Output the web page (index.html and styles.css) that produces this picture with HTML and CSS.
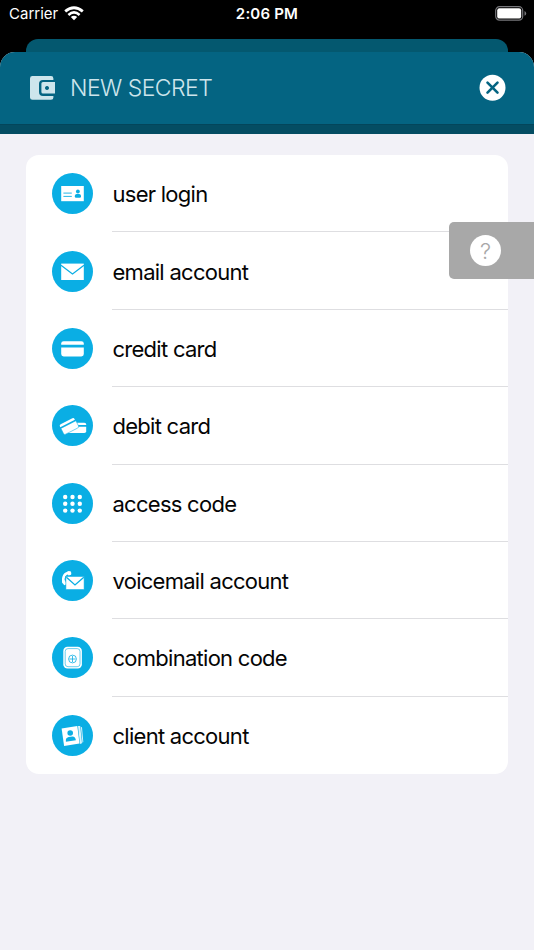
FILE: index.html
```html
<!DOCTYPE html>
<html lang="en">
<head>
  <meta charset="UTF-8">
  <meta name="viewport" content="width=device-width, initial-scale=1.0">
  <title>New Secret</title>
  <link rel="stylesheet" href="styles.css">
</head>
<body>
  <div class="status-bar">
    <div class="carrier">
      <span>Carrier</span>
      <svg class="wifi" viewBox="0 0 20 15" width="20" height="15">
        <path d="M1.2 5.4 Q10 -2 18.8 5.4" fill="none" stroke="#fff" stroke-width="2.8"/>
        <path d="M4.4 8.9 Q10 4 15.6 8.9" fill="none" stroke="#fff" stroke-width="2.6"/>
        <path d="M6.8 11.1 Q10 8.5 13.2 11.1 L10 14.2Z" fill="#fff"/>
      </svg>
    </div>
    <div class="time">2:06 PM</div>
    <svg class="battery" viewBox="0 0 32 15" width="32" height="15">
      <rect x=".7" y=".7" width="27" height="13.4" rx="3.8" fill="none" stroke="#77777b" stroke-width="1.2"/>
      <rect x="2.2" y="2.2" width="24" height="10.4" rx="2.2" fill="#fff"/>
      <path d="M29.5 5 Q31.2 5.8 31.2 7.4 T29.5 9.8Z" fill="#77777b"/>
    </svg>
  </div>
  <div class="back-sheet"></div>

  <div class="sheet">
    <header class="header">
      <svg class="wallet" viewBox="0 0 26 24" width="26" height="24">
        <path d="M2.5 0 H21 Q23.4 0 23.4 2.4 V4 H13 Q9 4 9 8 V16 Q9 20 13 20 H23.4 V21.4 Q23.4 23.8 21 23.8 H2.5 Q0 23.8 0 21.4 V2.4 Q0 0 2.5 0Z" fill="#cde5ec"/>
        <path fill-rule="evenodd" d="M13 6 H25 V17.6 H13 Q11.4 17.6 11.4 16 V7.6 Q11.4 6 13 6Z M17 10 a2 2 0 1 0 .01 0Z" fill="#cde5ec"/>
      </svg>
      <h1>NEW SECRET</h1>
      <svg class="close" viewBox="0 0 26 26" width="26" height="26">
        <circle cx="12.5" cy="12.7" r="13" fill="#fff"/>
        <path d="M7.5 7.7 L17.5 17.7 M17.5 7.7 L7.5 17.7" stroke="#046482" stroke-width="2.6" stroke-linecap="round"/>
      </svg>
    </header>
    <div class="strip"></div>

    <ul class="list">
      <li>
        <svg class="icon" viewBox="0 0 41 41">
          <circle cx="20.5" cy="20.5" r="20.5" fill="#0aaee4"/>
          <rect x="9.2" y="13" width="22.6" height="15.2" fill="#fff"/>
          <path d="M11.4 20.1 H19.8 M11.4 23.4 H19.8" stroke="#0aaee4" stroke-width=".9"/>
          <circle cx="25.9" cy="18.5" r="1.9" fill="#0aaee4"/>
          <path d="M22.8 22.7 Q23 21 24.7 21 H27.1 Q28.8 21 29 22.7 V23.4 Q29 24.7 27.7 24.7 H24.1 Q22.8 24.7 22.8 23.4Z" fill="#0aaee4"/>
        </svg>
        <span class="label">user login</span>
      </li>
      <li>
        <svg class="icon" viewBox="0 0 41 41">
          <circle cx="20.5" cy="20.5" r="20.5" fill="#0aaee4"/>
          <rect x="9.2" y="12.6" width="22.6" height="16.4" fill="#fff"/>
          <path d="M9 14.2 L20.5 22.9 L32 14.2" fill="none" stroke="#0aaee4" stroke-width="1.2"/>
        </svg>
        <span class="label">email account</span>
      </li>
      <li>
        <svg class="icon" viewBox="0 0 41 41">
          <circle cx="20.5" cy="20.5" r="20.5" fill="#0aaee4"/>
          <path d="M9.2 16.8 V15.6 Q9.2 13.2 11.6 13.2 H29.4 Q31.8 13.2 31.8 15.6 V16.8Z" fill="#fff"/>
          <path d="M9.2 19.4 H31.8 V26 Q31.8 28.4 29.4 28.4 H11.6 Q9.2 28.4 9.2 26Z" fill="#fff"/>
        </svg>
        <span class="label">credit card</span>
      </li>
      <li>
        <svg class="icon" viewBox="0 0 41 41">
          <circle cx="20.5" cy="20.5" r="20.5" fill="#0aaee4"/>
          <path d="M21 17.7 H32.3 Q34.2 17.7 34.2 19.2 V20.1 H21Z" fill="#fff"/>
          <path d="M15 21.7 H34.2 V26.3 Q34.2 28 32.3 28 H15.8Z" fill="#fff"/>
          <g transform="translate(7.2 20) rotate(-27)">
            <path d="M0 2.4 V1.5 Q0 0 1.6 0 H14.8 Q16.4 0 16.4 1.5 V2.4Z" fill="#fff"/>
            <path d="M0 3.8 H16.8 V9.4 Q16.8 11.1 15.2 11.1 H1.6 Q0 11.1 0 9.4Z" fill="#fff" stroke="#0aaee4" stroke-width=".5"/>
          </g>
        </svg>
        <span class="label">debit card</span>
      </li>
      <li>
        <svg class="icon" viewBox="0 0 41 41">
          <circle cx="20.5" cy="20.5" r="20.5" fill="#0aaee4"/>
          <g fill="#fff">
            <circle cx="13.2" cy="14" r="2.2"/>
            <circle cx="20.5" cy="14" r="2.2"/>
            <circle cx="27.8" cy="14" r="2.2"/>
            <circle cx="13.2" cy="20.8" r="2.2"/>
            <circle cx="20.5" cy="20.8" r="2.2"/>
            <circle cx="27.8" cy="20.8" r="2.2"/>
            <circle cx="13.2" cy="27.6" r="2.2"/>
            <circle cx="20.5" cy="27.6" r="2.2"/>
            <circle cx="27.8" cy="27.6" r="2.2"/>
          </g>
        </svg>
        <span class="label">access code</span>
      </li>
      <li>
        <svg class="icon" viewBox="0 0 41 41">
          <circle cx="20.5" cy="20.5" r="20.5" fill="#0aaee4"/>
          <path d="M17.6 12.6 Q9.8 13.4 11.6 23" fill="none" stroke="#fff" stroke-width="2.6"/>
          <path d="M15.6 11.2 L18.6 11.2 Q19.8 13 19.1 14.8 L16.6 15.6 Q15 13.6 15.6 11.2Z M10.2 21 L13 20.2 L14.6 24.2 L12.2 25.3 Q10.2 23.8 10.2 21Z" fill="#fff"/>
          <rect x="13.9" y="16.4" width="18.2" height="13.2" fill="#fff" stroke="#0aaee4" stroke-width=".6"/>
          <path d="M14.4 17.2 L23 25 L31.8 17.2" fill="none" stroke="#0aaee4" stroke-width="1.3"/>
        </svg>
        <span class="label">voicemail account</span>
      </li>
      <li>
        <svg class="icon" viewBox="0 0 41 41">
          <circle cx="20.5" cy="20.5" r="20.5" fill="#0aaee4"/>
          <rect x="11.3" y="9.7" width="18.6" height="21.9" rx="4.2" fill="#fff"/>
          <rect x="13.2" y="11.6" width="14.8" height="18.1" rx="2.8" fill="none" stroke="#0aaee4" stroke-width=".6"/>
          <circle cx="20.5" cy="22" r="3.9" fill="none" stroke="#0aaee4" stroke-width=".8"/>
          <path d="M20.5 19 V25 M17.5 22 H23.5" stroke="#0aaee4" stroke-width=".8"/>
        </svg>
        <span class="label">combination code</span>
      </li>
      <li>
        <svg class="icon" viewBox="0 0 41 41">
          <circle cx="20.5" cy="20.5" r="20.5" fill="#0aaee4"/>
          <path d="M26 10.9 L28.2 11 L30 28.3 L28 29Z M28.9 12 L30 12.2 L31.3 27.1 L30.5 27.8Z" fill="#fff" opacity=".85"/>
          <path d="M9.6 13.4 L25.3 10.9 L27.5 28.6 L12.1 31.1Z" fill="#fff"/>
          <circle cx="18.2" cy="18" r="2.8" fill="#0aaee4"/>
          <path d="M13.9 26.7 Q13.3 22.9 16.6 22 L20.5 21.4 Q23.4 21.6 23.9 25.2Z" fill="#0aaee4"/>
        </svg>
        <span class="label">client account</span>
      </li>
    </ul>
  </div>

  <div class="help">
    <div class="help-circle">?</div>
  </div>
</body>
</html>
```

FILE: styles.css
```css
* { box-sizing: border-box; }
body { margin: 0; height: 950px; overflow: hidden; position: relative; background: #000; font-family: Inter, "Liberation Sans", sans-serif; }
.status-bar { height: 39px; padding: 5px 7px 0 9px; display: grid; grid-template-columns: 1fr auto 1fr; align-items: start; color: #fff; font-size: 15px; line-height: 17px; }
.carrier { display: flex; gap: 6px; }
.wifi { display: block; margin-top: 1px; }
.time { font-weight: 600; letter-spacing: 0.2px; margin-right: 2px; }
.battery { justify-self: end; margin-top: 1px; }
.back-sheet { height: 13px; margin: 0 26px; background: #04586f; border-radius: 12px 12px 0 0; }
.sheet { height: 898px; background: #f2f1f7; border-radius: 15px 15px 0 0; overflow: hidden; }
.header { height: 72px; padding: 0 28px 0 30px; display: flex; align-items: center; background: #046482; }
h1 { margin: 0 0 0 14px; color: #cde5ec; font-size: 23px; font-weight: 300; letter-spacing: -0.55px; }
.close { margin-left: auto; overflow: visible; }
.strip { height: 10px; background: #044d63; border-top: 1px solid #03465b; }
.list { list-style: none; margin: 21px 26px 0; padding: 0; height: 619px; background: #fff; border-radius: 13px; display: grid; grid-template-rows: repeat(8, 1fr); }
.list li { display: flex; align-items: center; padding-left: 26px; }
.icon { width: 41px; height: 41px; flex: none; }
.label { flex: 1; height: 100%; margin-left: 19px; padding-left: 0.5px; display: flex; align-items: center; padding-top: 2px; border-bottom: 1px solid #dedee1; font-size: 22px; letter-spacing: -0.73px; color: #050505; }
.list li:last-child .label { border-bottom: none; padding-top: 1px; }
.help { position: absolute; top: 222px; right: 0; width: 85px; height: 57px; padding-left: 21px; display: flex; align-items: center; background: #a8a8a8; border-radius: 5px 0 0 5px; }
.help-circle { width: 31px; height: 31px; border-radius: 50%; background: #fff; color: #a8a8a8; font-size: 22px; font-weight: 300; line-height: 32px; text-align: center; }
```
